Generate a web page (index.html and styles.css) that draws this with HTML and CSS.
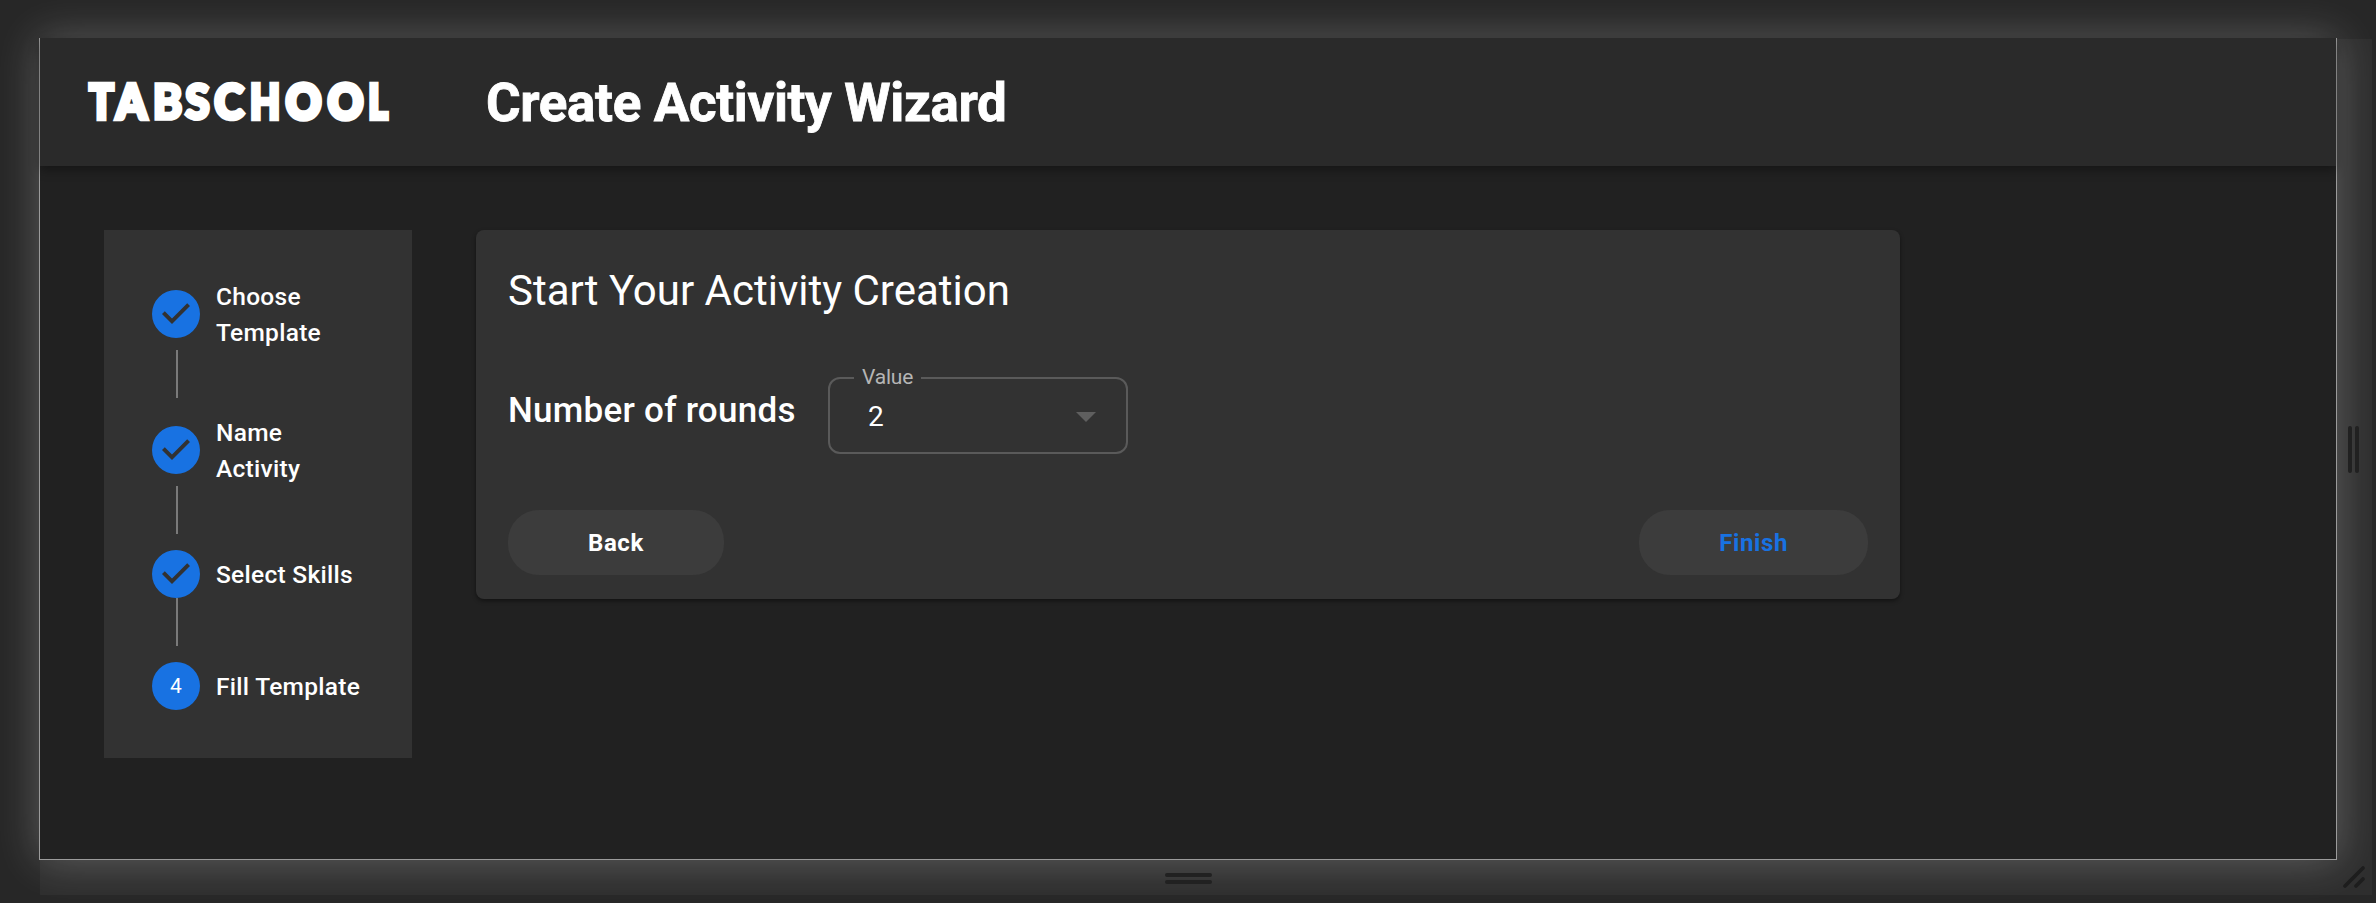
FILE: index.html
```html
<!DOCTYPE html>
<html lang="en">
<head>
<meta charset="utf-8">
<title>Create Activity Wizard</title>
<link rel="stylesheet" href="styles.css">
</head>
<body>
<div class="stage">
  <div class="screen">
    <header class="topbar">
      <div class="logo"><span class="l-t">T</span><span class="l-a">A</span><span class="l-b">B</span><span class="l-s">S</span><span class="l-c">C</span><span class="l-h">H</span><span class="l-o">O</span><span class="l-o2">O</span><span class="l-l">L</span></div>
      <h1 class="title">Create Activity Wizard</h1>
    </header>
    <main class="content">
      <nav class="stepper">
        <div class="step"><svg class="icon" viewBox="0 0 24 24"><path d="M12 0a12 12 0 1 0 0 24 12 12 0 0 0 0-24zm-2 17l-5-5 1.4-1.4 3.6 3.6 7.6-7.6L19 8l-9 9z"/></svg><span class="label">Choose Template</span></div>
        <div class="line"></div>
        <div class="step"><svg class="icon" viewBox="0 0 24 24"><path d="M12 0a12 12 0 1 0 0 24 12 12 0 0 0 0-24zm-2 17l-5-5 1.4-1.4 3.6 3.6 7.6-7.6L19 8l-9 9z"/></svg><span class="label">Name Activity</span></div>
        <div class="line"></div>
        <div class="step"><svg class="icon" viewBox="0 0 24 24"><path d="M12 0a12 12 0 1 0 0 24 12 12 0 0 0 0-24zm-2 17l-5-5 1.4-1.4 3.6 3.6 7.6-7.6L19 8l-9 9z"/></svg><span class="label">Select Skills</span></div>
        <div class="line"></div>
        <div class="step"><span class="number">4</span><span class="label">Fill Template</span></div>
      </nav>
      <section class="card">
        <h2 class="heading">Start Your Activity Creation</h2>
        <div class="row">
          <span class="question">Number of rounds</span>
          <fieldset class="select">
            <legend class="legend">Value</legend>
            <div class="control"><span>2</span><svg class="arrow" viewBox="0 0 20 10"><path d="M0 0h20L10 10z"/></svg></div>
          </fieldset>
        </div>
        <div class="actions">
          <button class="btn">Back</button>
          <button class="btn primary">Finish</button>
        </div>
      </section>
    </main>
  </div>
  <div class="handle right"><i></i><i></i></div>
  <div class="handle bottom"><i></i><i></i></div>
  <div class="handle corner"><svg class="grip" viewBox="0 0 22 22"><path d="M2 20L20 2M13 20l7-7"/></svg></div>
</div>
</body>
</html>
```
FILE: styles.css
```css
* { box-sizing: border-box; }
body { margin: 0; background: #272727; font-family: Roboto, "Liberation Sans", sans-serif; color: #fff; }
.stage { width: 2376px; height: 903px; overflow: hidden; display: grid; grid-template-columns: 2298px 35px; grid-template-rows: 822px 35px; padding: 38px 0 0 39px; }
.screen { border: 1px solid #9b9b9b; border-top: 0; background: #212121; box-shadow: 0 0 40px rgba(255,255,255,.25); display: flex; flex-direction: column; }
.topbar { height: 128px; flex: none; background: #2a2a2a; display: flex; align-items: center; padding-left: 48px; box-shadow: 0 4px 10px rgba(0,0,0,.35); }
.logo { margin: -3px 92px 0 0; font: 900 48px/64px Lato, sans-serif; display: grid; grid-template-columns: 27px 33px 39px 21px 42px 30px 47px 37px 30px; -webkit-text-stroke: 4.6px #fff; }
.logo span { display: flex; justify-content: center; }
.l-t { transform: scaleX(.84); }
.l-a { transform: scaleX(.9); }
.l-b { transform: scaleX(.93); -webkit-text-stroke-width: 3.6px; }
.l-s { transform: scaleX(.92); -webkit-text-stroke-width: 4px; }
.l-c { transform: scaleX(.92); }
.l-h { transform: scaleX(.81); }
.l-o, .l-o2 { transform: scaleX(.9); -webkit-text-stroke-width: 5.4px; }
.l-l { transform: translateX(-1px) scaleX(.78); }
.title { margin: 1px 0 0; font-size: 53px; font-weight: 700; line-height: 64px; letter-spacing: -.37px; white-space: nowrap; -webkit-text-stroke: .8px #fff; }
.content { display: flex; align-items: flex-start; padding: 64px; gap: 64px; }
.stepper { width: 308px; height: 528px; background: #323232; padding: 48px; }
.step { display: flex; align-items: center; gap: 16px; min-height: 48px; }
.icon, .number { width: 48px; height: 48px; flex: none; }
.icon { fill: #1872e2; }
.number { background: #1872e2; border-radius: 50%; font-size: 21px; line-height: 49px; text-align: center; }
.label { font-size: 24.5px; font-weight: 500; line-height: 36px; letter-spacing: .28px; margin: 1px -4px -1px 0; }
.line { width: 2px; height: 48px; margin: 0 0 16px 24px; background: #7a7a7a; }
.card { width: 1424px; height: 369px; background: #323232; border-radius: 8px; padding: 32px; box-shadow: 0 2px 4px rgba(0,0,0,.45); }
.heading { margin: 5px 0 0; font-size: 42px; font-weight: 400; line-height: 48px; white-space: nowrap; }
.row { display: flex; align-items: flex-start; padding-top: 50px; height: 195px; }
.question { width: 320px; font-size: 35px; font-weight: 500; line-height: 48px; padding-top: 22px; white-space: nowrap; letter-spacing: .25px; }
.select { width: 300px; height: 89px; margin: 0; border: 2px solid #5a5a5a; border-radius: 12px; padding: 0 30px 0 38px; min-width: 0; }
.legend { margin-left: -14px; padding: 0 8px; font-size: 21px; line-height: 25px; color: #b5b5b5; letter-spacing: -.2px; }
.control { display: flex; justify-content: space-between; align-items: center; font-size: 28px; line-height: 53px; }
.arrow { width: 20px; height: 10px; fill: #5f5f5f; }
.actions { display: flex; justify-content: space-between; }
.btn { height: 65px; padding: 0 80px; border: 0; border-radius: 31px; background: #3c3c3c; color: #fff; font: 700 24px/36px Roboto, sans-serif; letter-spacing: .6px; }
.primary { color: #1872e2; }
.handle { background: rgba(255,255,255,.035); display: flex; align-items: center; justify-content: center; gap: 3px; }
.handle i { display: block; background: #212121; border-radius: 2px; }
.right { margin-top: 1px; padding-right: 2px; }
.right i { width: 4px; height: 47px; }
.bottom { flex-direction: column; margin-left: 1px; padding-top: 1px; }
.bottom i { width: 47px; height: 4px; }
.corner { padding: 0 2px 2px 0; }
.grip { width: 22px; height: 22px; fill: none; stroke: #1d1d1d; stroke-width: 3.6; stroke-linecap: round; }
```
